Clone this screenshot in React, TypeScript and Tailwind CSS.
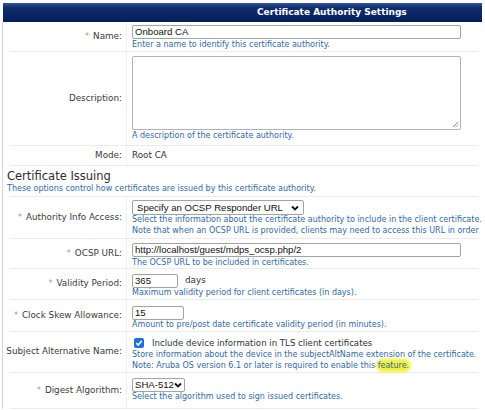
import type { ReactNode } from "react";

const help = "text-[8px] leading-[10px] text-[#2f69a6] whitespace-nowrap";

const Label = ({ text, req }: { text: string; req?: boolean }) => (
  <div className="w-[117px] shrink-0 flex items-center justify-end pr-[4px] border-r border-[#f1f1f1] text-[8.8px] text-[#3a3a3a] whitespace-nowrap">
    {req && <span className="text-[#9a9a9a] mr-[4px] text-[8px]">*</span>}
    {text}
  </div>
);

const Row = ({
  label,
  req,
  h,
  pt,
  children,
}: {
  label: string;
  req?: boolean;
  h: string;
  pt: string;
  children: ReactNode;
}) => (
  <div className={`flex ml-[7px] mr-[7px] border-b border-[#ececec] ${h}`}>
    <Label text={label} req={req} />
    <div className={`flex flex-col min-w-0 pl-[5px] ${pt}`}>{children}</div>
  </div>
);

const Chevron = () => (
  <svg width="8" height="6" viewBox="0 0 8 6" className="shrink-0">
    <path d="M1 1.5 L4 4.5 L7 1.5" fill="none" stroke="#111" strokeWidth="1.8" />
  </svg>
);

const inputCls =
  "h-[14px] border border-[#a3a3a3] rounded-[2px] bg-white px-[2px] flex items-center text-[9.6px] text-[#111] font-['Liberation_Sans',Arial,sans-serif] leading-none whitespace-nowrap";

export default function App() {
  return (
    <div className="w-[485px] h-[410px] overflow-hidden bg-white font-['DejaVu_Sans',Verdana,sans-serif]">
      <div className="mt-[3px] ml-[3px] w-[479px] h-[19px] bg-[linear-gradient(#34569a,#0e2d6d_25%,#04205b)] flex items-center pl-[254px] text-[9px] font-bold text-white">
        Certificate Authority Settings
      </div>
      <div className="ml-[2px] border-l border-[#d6d6d6]">
        <Row label="Name:" req h="h-[30px]" pt="pt-[3px]">
          <div className={`${inputCls} w-[329px]`}>Onboard CA</div>
          <div className={`${help} mt-[1px]`}>Enter a name to identify this certificate authority.</div>
        </Row>

        <Row label="Description:" h="h-[94px]" pt="pt-[4px]">
          <div className="relative w-[329px] h-[74px] border border-[#b3b3b3] rounded-[2px] bg-white">
            <svg width="7" height="7" viewBox="0 0 7 7" className="absolute right-[1px] bottom-[1px]">
              <path d="M6 1 L1 6 M6 3.5 L3.5 6" stroke="#9a9a9a" strokeWidth="1" />
            </svg>
          </div>
          <div className={`${help} mt-[1px]`}>A description of the certificate authority.</div>
        </Row>

        <Row label="Mode:" h="h-[20px]" pt="pt-0 justify-center">
          <div className="text-[8.8px] text-[#333] whitespace-nowrap">Root CA</div>
        </Row>

        <div className="ml-[7px] mr-[7px] h-[31px] border-b border-[#ececec] pt-[3px]">
          <div className="-ml-[3px] text-[11.5px] leading-[14px] text-[#2e2e2e] whitespace-nowrap">
            Certificate Issuing
          </div>
          <div className={`-ml-[3px] ${help} mt-[1px]`}>
            These options control how certificates are issued by this certificate authority.
          </div>
        </div>

        <Row label="Authority Info Access:" req h="h-[42px]" pt="pt-[3px]">
          <div className={`${inputCls} h-[15px] w-[172px] border-[#8a8a8a] justify-between pl-[4px] pr-[4px]`}>
            <span>Specify an OCSP Responder URL</span>
            <Chevron />
          </div>
          <div className="text-[8px] leading-[10.5px] text-[#2f69a6] whitespace-nowrap">
            Select the information about the certificate authority to include in the client certificate.
          </div>
          <div className="text-[8px] leading-[10.5px] text-[#2f69a6] whitespace-nowrap overflow-hidden w-[347px]">
            Note that when an OCSP URL is provided, clients may need to access this URL in order
          </div>
        </Row>

        <Row label="OCSP URL:" req h="h-[30px]" pt="pt-[4px]">
          <div className={`${inputCls} w-[329px]`}>http://localhost/guest/mdps_ocsp.php/2</div>
          <div className={`${help} mt-[1px]`}>The OCSP URL to be included in certificates.</div>
        </Row>

        <Row label="Validity Period:" req h="h-[31px]" pt="pt-[5px]">
          <div className="flex items-center">
            <div className={`${inputCls} w-[46px]`}>365</div>
            <span className="ml-[7px] text-[8.8px] text-[#333]">days</span>
          </div>
          <div className={help}>Maximum validity period for client certificates (in days).</div>
        </Row>

        <Row label="Clock Skew Allowance:" req h="h-[32px]" pt="pt-[6px]">
          <div className={`${inputCls} w-[52px]`}>15</div>
          <div className={help}>Amount to pre/post date certificate validity period (in minutes).</div>
        </Row>

        <Row label="Subject Alternative Name:" h="h-[41px]" pt="pt-[5px]">
          <div className="flex items-center h-[12px]">
            <span className="ml-[2px] w-[10px] h-[10px] rounded-[2px] bg-[#1f6fdc] flex items-center justify-center">
              <svg width="8" height="8" viewBox="0 0 8 8">
                <path d="M1.3 4.2 L3.2 6 L6.8 1.8" fill="none" stroke="#fff" strokeWidth="1.6" />
              </svg>
            </span>
            <span className="ml-[8px] text-[8.6px] text-[#333] whitespace-nowrap">
              Include device information in TLS client certificates
            </span>
          </div>
          <div className="text-[8px] leading-[11px] text-[#2f69a6] whitespace-nowrap">
            Store information about the device in the subjectAltName extension of the certificate.
          </div>
          <div className="text-[8px] leading-[11px] text-[#2f69a6] whitespace-nowrap">
            Note: Aruba OS version 6.1 or later is required to enable this{" "}
            <span className="bg-[#f2f23a] rounded-[5px] shadow-[0_0_3px_2px_#f2f23a]">feature.</span>
          </div>
        </Row>

        <Row label="Digest Algorithm:" req h="h-[36px]" pt="pt-[5px]">
          <div className={`${inputCls} w-[53px] border-[#8a8a8a] justify-between pr-[3px]`}>
            <span>SHA-512</span>
            <Chevron />
          </div>
          <div className={help}>Select the algorithm used to sign issued certificates.</div>
        </Row>
      </div>
    </div>
  );
}
